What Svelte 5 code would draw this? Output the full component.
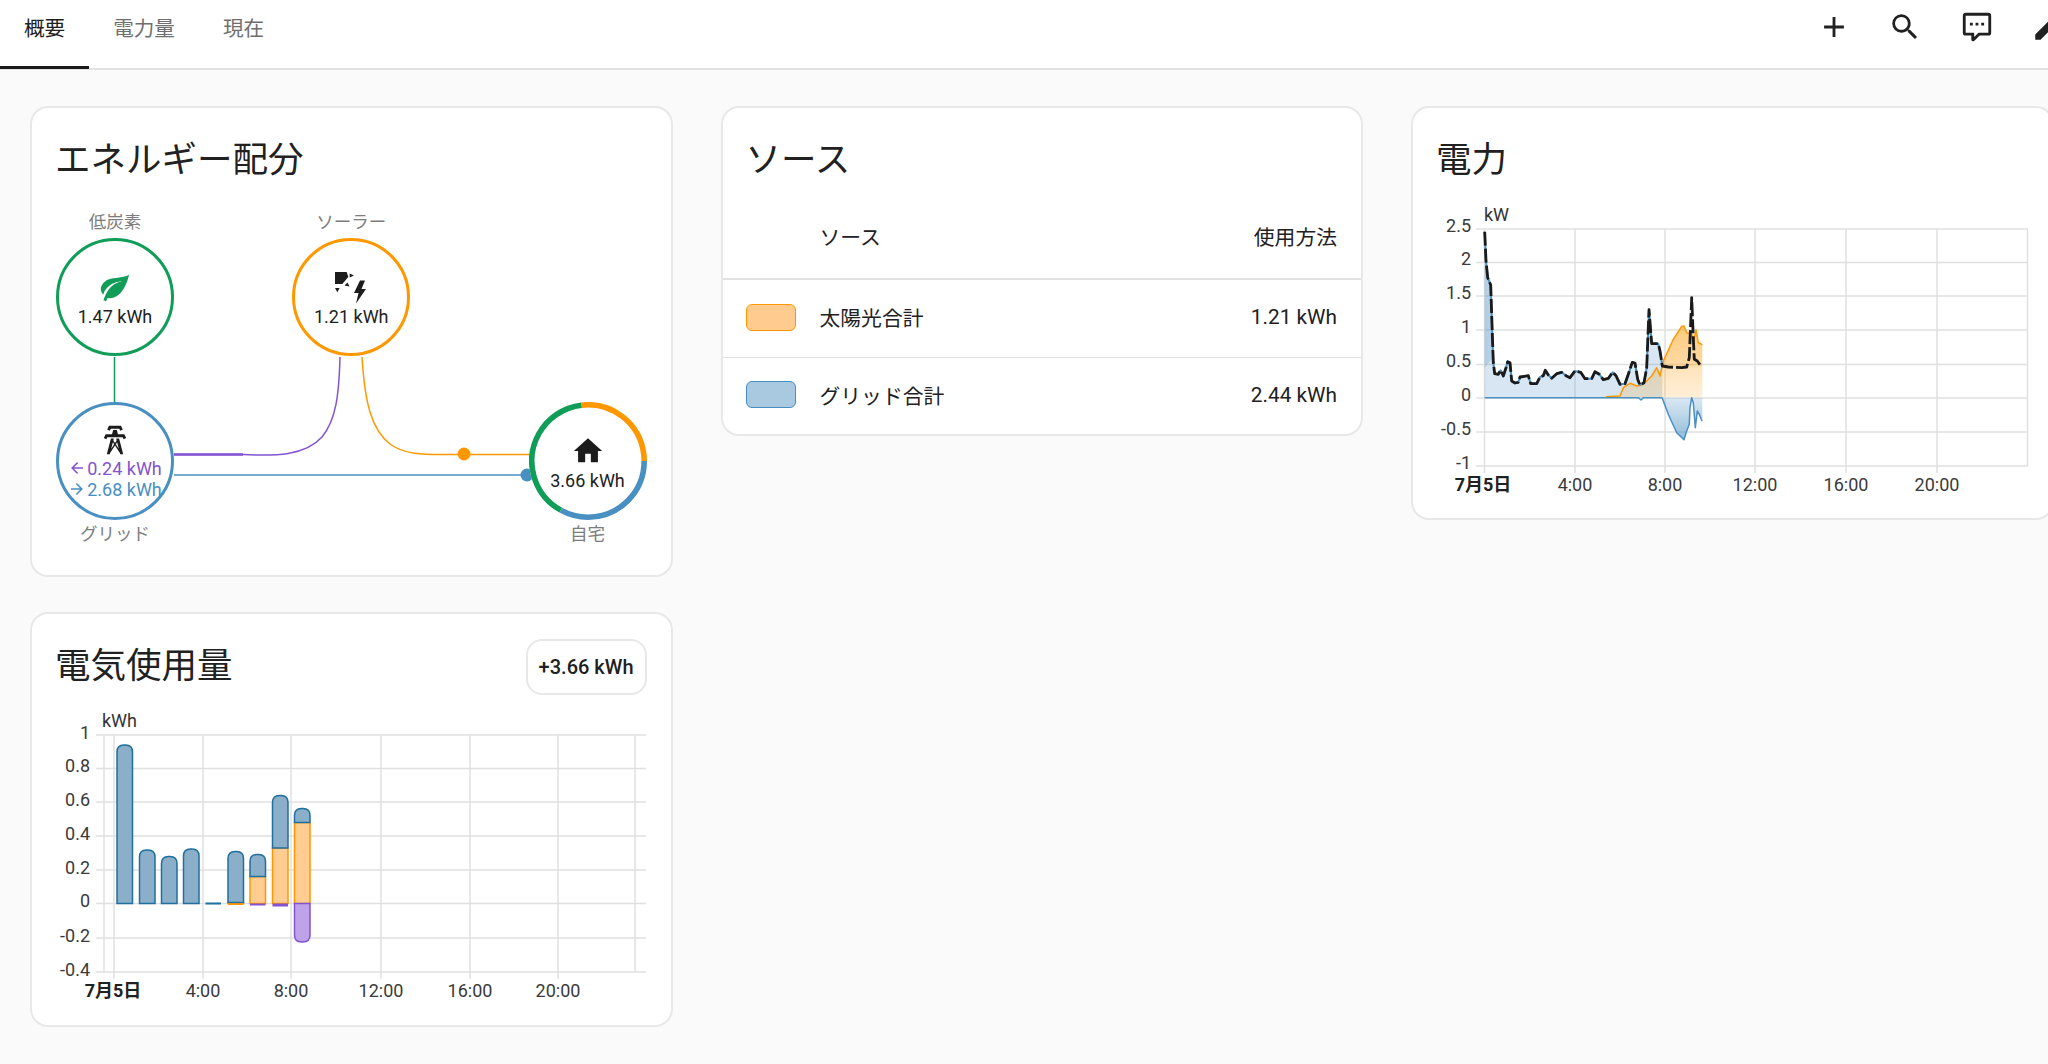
<script>
  const tabs = ["概要", "電力量", "現在"];

  // home ring segments, degrees clockwise from 12 o'clock
  const ring = [
    { color: "#ff9800", start: -6.7, len: 96.7 },
    { color: "#488fc2", start: 90, len: 119 },
    { color: "#0f9d58", start: 209, len: 144.3 },
  ];

  const sources = [
    { name: "太陽光合計", value: "1.21 kWh", kind: "solar" },
    { name: "グリッド合計", value: "2.44 kWh", kind: "grid" },
  ];

  // usage chart
  const usageTicks = [
    ["1", 734], ["0.8", 767.5], ["0.6", 801], ["0.4", 835], ["0.2", 869], ["0", 902.5], ["-0.2", 937], ["-0.4", 971],
  ];
  const usageHours = [
    ["4:00", 203], ["8:00", 291], ["12:00", 381], ["16:00", 470], ["20:00", 558],
  ];
  const barWidth = 15.5;
  const usageBars = [
    { x: 117, top: 744, split: 902.5 },
    { x: 139.5, top: 849, split: 902.5 },
    { x: 161.5, top: 855.5, split: 902.5 },
    { x: 183.5, top: 848, split: 902.5 },
    { x: 228, top: 850.5, split: 901.5 },
    { x: 250, top: 853.5, split: 875.5 },
    { x: 272.5, top: 794.5, split: 847 },
    { x: 294.5, top: 807.5, split: 821.5 },
  ];

  function topRounded(x, w, top, bottom, r) {
    const rr = Math.min(r, (bottom - top));
    return `M${x},${bottom}V${top + rr}Q${x},${top} ${x + rr},${top}H${x + w - rr}Q${x + w},${top} ${x + w},${top + rr}V${bottom}Z`;
  }

  // power chart, traced in 3x crop coordinates
  const toPage = ([x, y]) => `${(1460 + x / 3).toFixed(1)},${(210 + y / 3).toFixed(1)}`;
  const line = (pts) => pts.map(toPage).join(" ");

  const consumption = [
    [74,62],[78,150],[83,200],[92,222],[96,340],[100,455],[104,488],[115,490],[122,478],[130,495],[138,470],[143,452],[150,455],[155,510],
    [165,516],[175,514],[180,498],[205,494],[212,518],[230,518],[240,498],[250,494],[256,478],[265,492],[275,502],[290,488],[305,484],
    [318,494],[330,500],[345,480],[362,484],[375,503],[395,503],[405,482],[418,490],[430,506],[445,502],[458,484],[468,494],[480,520],
    [495,518],[505,490],[517,454],[525,456],[533,505],[540,522],[552,515],[560,470],[567,296],[575,398],[595,398],[600,420],[607,465],
    [625,468],[665,470],[680,468],[688,440],[695,260],[700,380],[703,445],[712,450],[725,468],
  ];
  const gridPart = consumption.slice(0, 53);
  const solar = [
    [438,557],[480,555],[490,530],[510,517],[530,525],[545,522],[560,510],[575,495],[590,470],[600,495],[610,450],[640,385],[665,346],
    [672,345],[680,365],[695,368],[700,400],[708,356],[715,395],[722,398],[727,402],
  ];
  const returned = [
    [607,562],[625,610],[650,665],[672,686],[680,660],[688,640],[690,590],[695,560],[700,575],[706,650],[712,600],[718,610],[725,628],[727,630],
  ];
  const powerTicks = [
    ["2.5", 228], ["2", 261.5], ["1.5", 295], ["1", 329], ["0.5", 363.5], ["0", 397], ["-0.5", 431], ["-1", 465],
  ];
  const powerHours = [
    ["4:00", 1575], ["8:00", 1665], ["12:00", 1755], ["16:00", 1846], ["20:00", 1937],
  ];
</script>

<header class="topbar">
  <nav class="tabs">
    {#each tabs as tab, i}
      <div class="tab" class:active={i === 0}>{tab}</div>
    {/each}
  </nav>
  <div class="actions">
    <svg viewBox="0 0 24 24"><path d="M19,13H13V19H11V13H5V11H11V5H13V11H19V13Z" /></svg>
    <svg viewBox="0 0 24 24"><path d="M9.5,3A6.5,6.5 0 0,1 16,9.5C16,11.11 15.41,12.59 14.44,13.73L14.71,14H15.5L20.5,19L19,20.5L14,15.5V14.71L13.73,14.44C12.59,15.41 11.11,16 9.5,16A6.5,6.5 0 0,1 3,9.5A6.5,6.5 0 0,1 9.5,3M9.5,5C7,5 5,7 5,9.5C5,12 7,14 9.5,14C12,14 14,12 14,9.5C14,7 12,5 9.5,5Z" /></svg>
    <svg viewBox="0 0 24 24"><path d="M9,22A1,1 0 0,1 8,21V18H4A2,2 0 0,1 2,16V4C2,2.89 2.9,2 4,2H20A2,2 0 0,1 22,4V16A2,2 0 0,1 20,18H13.9L10.2,21.71C10,21.9 9.75,22 9.5,22V22H9M10,16V19.08L13.08,16H20V4H4V16H10M17,11H15V9H17V11M13,11H11V9H13V11M9,11H7V9H9V11Z" /></svg>
    <svg viewBox="0 0 24 24"><path d="M20.71,7.04C21.1,6.65 21.1,6 20.71,5.63L18.37,3.29C18,2.9 17.35,2.9 16.96,3.29L15.12,5.12L18.87,8.87M3,17.25V21H6.75L17.81,9.93L14.06,6.18L3,17.25Z" /></svg>
  </div>
</header>

<main class="board">
  <div class="column">
    <section class="card">
      <h2 class="card-title">エネルギー配分</h2>
      <div class="flow">
        <svg class="flow-lines" viewBox="56 212 591 331">
          <path d="M114.5,357V402" stroke="#0f9d58" />
          <path d="M174,454.5H243C275,456 305,456 322,437C336,420 339,395 340,357" stroke="#8353d1" />
          <path d="M174,454.5H243" stroke="#8353d1" stroke-width="2.5" />
          <path d="M362,357C365,405 372,430 390,444C405,455 425,454.5 445,454.5H530" stroke="#ff9800" />
          <path d="M174,475H530" stroke="#488fc2" />
          <circle cx="464" cy="454" r="6.5" fill="#ff9800" />
          <circle cx="527" cy="475" r="6.5" fill="#488fc2" />
        </svg>

        <div class="flow-row">
          <div class="flow-item">
            <div class="flow-label">低炭素</div>
            <div class="node low">
              <svg class="icon leaf" viewBox="0 0 24 24"><path d="M17,8C8,10 5.9,16.17 3.82,21.34L5.71,22L6.66,19.7C7.14,19.87 7.64,20 8,20C19,20 22,3 22,3C21,5 14,5.25 9,6.25C4,7.25 2,11.5 2,13.5C2,15.5 3.75,17.25 3.75,17.25C7,8 17,8 17,8Z" /></svg>
              <span>1.47 kWh</span>
            </div>
          </div>
          <div class="flow-item">
            <div class="flow-label">ソーラー</div>
            <div class="node sun">
              <svg class="icon" viewBox="10 4.5 34 34">
                <path d="M11,6.5H22.7L24.3,11.5L18.3,18.5H11Z" />
                <path d="M25.7,8L30,10L25.7,12Z" />
                <path d="M20.5,20L23.5,17L25.5,21Z" />
                <path d="M11,22.5H15.7L13.3,26.7Z" />
                <path d="M36,15L30,27.5H34.5L32,38L42,23.5H37.5L41,15Z" />
              </svg>
              <span>1.21 kWh</span>
            </div>
          </div>
          <div class="flow-item spacer"></div>
        </div>

        <div class="flow-row lower">
          <div class="flow-item">
            <div class="node grid">
              <svg class="icon" viewBox="0 0 24 24"><path d="M8.28,5.45L6.5,4.55L7.76,2H16.23L17.5,4.55L15.72,5.44L15,4H9L8.28,5.45M18.62,8H14.09L13.3,5H10.7L9.91,8H5.38L4.1,10.55L5.89,11.44L6.62,10H17.38L18.1,11.45L19.89,10.56L18.62,8M17.77,22H15.7L15.46,21.1L12,15.9L8.53,21.1L8.3,22H6.23L9.12,11H11.19L10.83,12.35L12,14.1L13.16,12.35L12.81,11H14.88L17.77,22M11.4,15L10.5,13.65L9.32,18.13L11.4,15M14.68,18.12L13.5,13.64L12.6,15L14.68,18.12Z" /></svg>
              <span class="grid-value returned">
                <svg viewBox="0 0 24 24"><path d="M20,11V13H8L13.5,18.5L12.08,19.92L4.16,12L12.08,4.08L13.5,5.5L8,11H20Z" /></svg>0.24 kWh
              </span>
              <span class="grid-value consumed">
                <svg viewBox="0 0 24 24"><path d="M4,11V13H16L10.5,18.5L11.92,19.92L19.84,12L11.92,4.08L10.5,5.5L16,11H4Z" /></svg>2.68 kWh
              </span>
            </div>
            <div class="flow-label below">グリッド</div>
          </div>
          <div class="flow-item spacer"></div>
          <div class="flow-item">
            <div class="node home">
              <svg class="ring" viewBox="0 0 118 118">
                {#each ring as seg}
                  <circle
                    cx="59" cy="59" r="56.2"
                    pathLength="360"
                    fill="none"
                    stroke={seg.color}
                    stroke-width="5.6"
                    stroke-dasharray="{seg.len} 360"
                    transform="rotate({seg.start - 90} 59 59)"
                  />
                {/each}
              </svg>
              <svg class="icon" viewBox="0 0 24 24"><path d="M10,20V14H14V20H19V12H22L12,3L2,12H5V20H10Z" /></svg>
              <span>3.66 kWh</span>
            </div>
            <div class="flow-label below">自宅</div>
          </div>
        </div>
      </div>
    </section>

    <section class="card">
      <div class="title-row">
        <h2 class="card-title">電気使用量</h2>
        <div class="badge">+3.66 kWh</div>
      </div>
      <svg class="chart usage" viewBox="32 694 638 328">
        {#each usageTicks as [, y]}
          <line class="rule" x1="96" x2="646" y1={y} y2={y} />
        {/each}
        <line class="rule" x1="104" x2="104" y1="734" y2="971" />
        <line class="rule" x1="114" x2="114" y1="734" y2="978" />
        <line class="rule" x1="635" x2="635" y1="734" y2="971" />
        {#each usageHours as [, x]}
          <line class="rule" x1={x} x2={x} y1="734" y2="978" />
        {/each}

        {#each usageBars as bar}
          {#if bar.split < 902}
            <rect x={bar.x} y={bar.split} width={barWidth} height={902.5 - bar.split} fill="#ffcc91" stroke="#ff9800" stroke-width="1.5" />
          {/if}
          <path d={topRounded(bar.x, barWidth, bar.top, bar.split, 7)} fill="#8bafc9" stroke="#1f6f9f" stroke-width="1.5" />
        {/each}
        <rect x="205.5" y="901.5" width="15.5" height="2" fill="#1f6f9f" />
        <rect x="228" y="902.5" width="15.5" height="1.5" fill="#ff9800" />
        <rect x="250" y="902.5" width="15.5" height="2" fill="#8353d1" />
        <rect x="272.5" y="902.5" width="15.5" height="3" fill="#8353d1" />
        <path d="M294.5,902.5V934Q294.5,941 301.5,941H303Q310,941 310,934V902.5Z" fill="#bfa3e8" stroke="#8353d1" stroke-width="1.5" />

        <text class="unit" x="102" y="721">kWh</text>
        {#each usageTicks as [label, y]}
          <text class="tick" x="90" y={y - 1} text-anchor="end">{label}</text>
        {/each}
        <text class="tick day" x="113" y="991" text-anchor="middle">7月5日</text>
        {#each usageHours as [label, x]}
          <text class="tick" {x} y="991" text-anchor="middle">{label}</text>
        {/each}
      </svg>
    </section>
  </div>

  <section class="card">
    <h2 class="card-title">ソース</h2>
    <div class="table">
      <div class="table-row table-head">
        <span class="swatch-slot"></span>
        <span class="name">ソース</span>
        <span>使用方法</span>
      </div>
      {#each sources as source}
        <div class="table-row">
          <span class="swatch-slot"><span class="swatch {source.kind}"></span></span>
          <span class="name">{source.name}</span>
          <span>{source.value}</span>
        </div>
      {/each}
    </div>
  </section>

  <section class="card">
    <h2 class="card-title">電力</h2>
    <svg class="chart power" viewBox="1413 188 638 328">
      <defs>
        <linearGradient id="solarFade" x1="0" x2="0" y1="0" y2="1">
          <stop offset="0" stop-color="#ff9800" stop-opacity="0.5" />
          <stop offset="0.55" stop-color="#ff9800" stop-opacity="0.36" />
          <stop offset="0.6" stop-color="#ff9800" stop-opacity="0.26" />
          <stop offset="1" stop-color="#ff9800" stop-opacity="0.16" />
        </linearGradient>
        <linearGradient id="returnFade" x1="0" x2="0" y1="0" y2="1">
          <stop offset="0" stop-color="#488fc2" stop-opacity="0.2" />
          <stop offset="1" stop-color="#488fc2" stop-opacity="0.6" />
        </linearGradient>
      </defs>

      {#each powerTicks as [, y]}
        <line class="rule" x1="1476" x2="2028" y1={y} y2={y} />
      {/each}
      <line class="rule" x1="1484.5" x2="1484.5" y1="228" y2="472" />
      <line class="rule" x1="2027.5" x2="2027.5" y1="228" y2="465" />
      {#each powerHours as [, x]}
        <line class="rule" x1={x} x2={x} y1="228" y2="472" />
      {/each}

      <polygon points="{line(gridPart)} {toPage([607,560])} {toPage([74,560])}" fill="#488fc2" fill-opacity="0.22" />
      <polygon points="{toPage([74,170])} {toPage([84,205])} {toPage([92,225])} {toPage([96,340])} {toPage([98,440])} {toPage([74,470])}" fill="#488fc2" fill-opacity="0.25" />
      <polygon points="{line(solar)} {toPage([727,558])} {toPage([438,558])}" fill="url(#solarFade)" />
      <polygon points="{toPage([607,560])} {line(returned)} {toPage([727,560])}" fill="url(#returnFade)" />

      <polyline points={line(solar)} fill="none" stroke="#ff9800" stroke-width="1.5" stroke-linejoin="round" />
      <polyline points="{toPage([74,560])} {toPage([536,560])} {toPage([543,567])} {toPage([550,560])} {toPage([605,560])} {line(returned)}" fill="none" stroke="#488fc2" stroke-width="1.5" stroke-linejoin="round" />
      <polyline points={line(gridPart)} fill="none" stroke="#488fc2" stroke-width="2" stroke-linejoin="round" />
      <polyline points={line(consumption)} fill="none" stroke="#1a1a1a" stroke-width="2.8" stroke-linejoin="round" stroke-dasharray="14 3" />

      <text class="unit" x="1484" y="215">kW</text>
      {#each powerTicks as [label, y]}
        <text class="tick" x="1471" y={y - 2} text-anchor="end">{label}</text>
      {/each}
      <text class="tick day" x="1483" y="485" text-anchor="middle">7月5日</text>
      {#each powerHours as [label, x]}
        <text class="tick" {x} y="485" text-anchor="middle">{label}</text>
      {/each}
    </svg>
  </section>
</main>

<style>
  :global(body) {
    margin: 0;
    background: #fafafa;
    overflow: hidden;
    font-family: Roboto, "Noto Sans CJK JP", sans-serif;
    color: #212121;
  }

  .topbar {
    display: flex;
    justify-content: space-between;
    height: 68px;
    background: #fff;
    border-bottom: 2px solid #e2e2e2;
  }

  .tabs {
    display: flex;
  }

  .tab {
    position: relative;
    padding: 0 24px;
    line-height: 58px;
    font-size: 20.6px;
    color: #6f6f6f;
  }

  .tab.active {
    color: #212121;
  }

  .tab.active::after {
    content: "";
    position: absolute;
    left: 0;
    right: 0;
    bottom: -1px;
    height: 3px;
    background: #1a1a1a;
  }

  .actions {
    display: flex;
    gap: 37.5px;
    padding-top: 10px;
    margin-right: -17px;
  }

  .actions svg {
    width: 34px;
    height: 34px;
    fill: #212121;
  }

  .board {
    display: grid;
    grid-template-columns: repeat(3, 642.5px);
    column-gap: 48px;
    align-items: start;
    padding: 36px 0 0 30px;
    width: 2100px;
  }

  .column {
    display: flex;
    flex-direction: column;
    gap: 35px;
  }

  .card {
    background: #fff;
    border: 2px solid #e8e8e8;
    border-radius: 18px;
  }

  .card-title {
    margin: 0;
    padding: 23px 23px 0;
    font-size: 35.5px;
    font-weight: 400;
    line-height: 58px;
    color: #212121;
  }

  .title-row {
    display: flex;
    justify-content: space-between;
    align-items: flex-end;
    padding-right: 24px;
  }

  .badge {
    height: 52px;
    padding: 0 11px;
    border: 2px solid #e8e8e8;
    border-radius: 16px;
    font-size: 20px;
    font-weight: 500;
    line-height: 52px;
  }

  .flow {
    position: relative;
    margin: 23px 24px 32px;
    display: flex;
    flex-direction: column;
    gap: 46px;
  }

  .flow-lines {
    position: absolute;
    inset: 0;
    width: 591px;
    height: 331px;
    fill: none;
    stroke-width: 1.5;
  }

  .flow-row {
    display: flex;
    justify-content: space-between;
  }

  .flow-item {
    width: 118px;
  }

  .flow-label {
    height: 26px;
    font-size: 17.5px;
    line-height: 20px;
    text-align: center;
    color: #7d7d7d;
  }

  .flow-label.below {
    height: 23px;
    line-height: 28px;
  }

  .node {
    position: relative;
    box-sizing: border-box;
    width: 118px;
    height: 118px;
    padding-top: 4px;
    border: 3px solid;
    border-radius: 50%;
    background: #fff;
    display: flex;
    flex-direction: column;
    align-items: center;
    justify-content: center;
    font-size: 18px;
    line-height: 24px;
    color: #212121;
  }

  .node .icon {
    width: 34px;
    height: 34px;
    margin-bottom: 1px;
    fill: #1c1c1c;
    flex: none;
  }

  .node .leaf {
    fill: #0f9d58;
  }

  .node.low {
    border-color: #0f9d58;
  }

  .node.sun {
    border-color: #ff9800;
  }

  .node.grid {
    border-color: #488fc2;
    padding-top: 0;
    line-height: 21px;
  }

  .node.home {
    border-color: transparent;
  }

  .ring {
    position: absolute;
    left: -3px;
    top: -3px;
    width: 118px;
    height: 118px;
  }

  .grid-value {
    display: flex;
    align-items: center;
    white-space: nowrap;
  }

  .grid-value svg {
    width: 18px;
    height: 18px;
    margin-right: 1px;
    fill: currentColor;
  }

  .returned {
    color: #8353d1;
  }

  .consumed {
    color: #488fc2;
  }

  .table {
    margin-top: 4px;
    font-size: 20.8px;
  }

  .table-row {
    box-sizing: border-box;
    display: flex;
    align-items: center;
    height: 78px;
    padding: 0 24px 3px 23px;
    border-top: 1px solid #e2e2e2;
  }

  .table-row:last-child {
    height: 77px;
  }

  .table-head {
    height: 86px;
    padding-bottom: 0;
    border-top: none;
    border-bottom: 1px solid #e2e2e2;
  }

  .swatch-slot {
    width: 74px;
    flex: none;
    display: flex;
  }

  .name {
    flex: 1;
  }

  .swatch {
    box-sizing: border-box;
    width: 50px;
    height: 27px;
    border: 1.5px solid;
    border-radius: 6px;
  }

  .swatch.solar {
    background: #ffcb8f;
    border-color: #ff9800;
  }

  .swatch.grid {
    background: #a9c9e1;
    border-color: #488fc2;
  }

  .chart {
    display: block;
    width: 638px;
    height: 328px;
    overflow: hidden;
  }

  .chart.usage {
    margin-bottom: 2px;
  }

  .chart.power {
    margin-bottom: 1px;
  }

  .rule {
    stroke: #e0e0e0;
    stroke-width: 1.5;
  }

  .unit {
    font-size: 18px;
    fill: #333;
    dominant-baseline: middle;
  }

  .tick {
    font-size: 18px;
    fill: #3a3a3a;
    dominant-baseline: middle;
  }

  .tick.day {
    font-weight: 700;
    fill: #212121;
  }
</style>
